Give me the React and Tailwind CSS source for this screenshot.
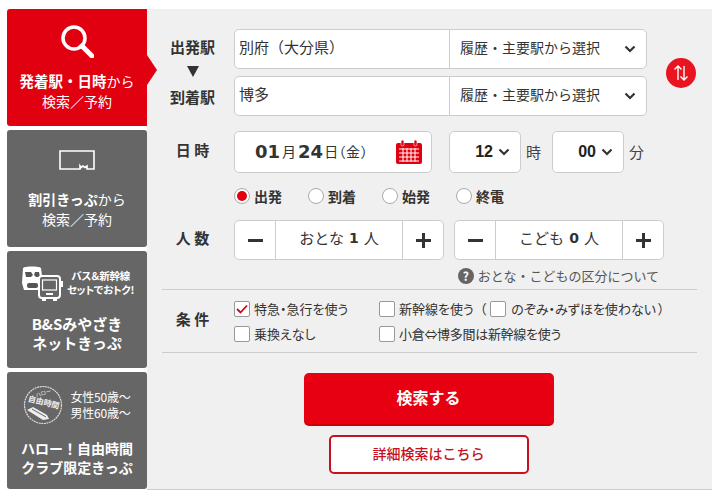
import React from "react";

const FONT = { fontFamily: '"Noto Sans CJK JP", "Liberation Sans", sans-serif' };

const Chevron = ({ className }) => (
  <svg viewBox="0 0 12 8" className={className} fill="none" stroke="#333" strokeWidth="2.2">
    <path d="M1.5 1.5 6 6l4.5-4.5" />
  </svg>
);

const SideTab = ({ active, children }) => (
  <div
    className={`relative h-[117px] rounded-l-[3px] flex flex-col items-center text-white ${
      active ? "bg-[#e1000f]" : "bg-[#666666] rounded-r-[3px]"
    }`}
  >
    {children}
    {active && (
      <div className="absolute left-full top-[46px] w-0 h-0 border-y-[15px] border-y-transparent border-l-[10px] border-l-[#e1000f]" />
    )}
  </div>
);

const Label = ({ children }) => (
  <div className="w-[72px] shrink-0 pr-[11px] pb-[5px] text-center text-[15px] font-bold text-[#333] leading-none">
    {children}
  </div>
);

const StationInput = ({ value }) => (
  <div className="h-10 w-[413px] flex bg-white border border-[#ccc] rounded-[5px] text-[#333]">
    <div className="w-[215px] border-r border-[#ccc] pl-[4px] pb-[3px] flex items-center text-[15px]">{value}</div>
    <div className="flex-1 pl-[10px] pr-[10px] flex items-center justify-between text-[14px]">
      <span className="pb-[3px]">履歴・主要駅から選択</span>
      <Chevron className="w-[12px] h-[8px]" />
    </div>
  </div>
);

const TimeSelect = ({ value }) => (
  <div className="h-[42px] w-[72px] bg-white border border-[#ccc] rounded-[5px] flex items-center justify-end pr-[10px] gap-[5px]">
    <span className="text-[16px] font-bold text-[#222]" style={{ fontFamily: '"Liberation Sans", sans-serif' }}>
      {value}
    </span>
    <Chevron className="w-[12px] h-[8px]" />
  </div>
);

const Radio = ({ checked, label, className = "" }) => (
  <div className={`flex items-center gap-[4px] ${className}`}>
    <span className="w-4 h-4 rounded-full bg-white border border-[#aaa] flex items-center justify-center">
      {checked && <span className="w-[10px] h-[10px] rounded-full bg-[#e1000f]" />}
    </span>
    <span className="text-[14px] font-bold text-[#333]">{label}</span>
  </div>
);

const Stepper = ({ label, count }) => (
  <div className="h-10 w-[210px] flex bg-white border border-[#ccc] rounded-[5px] text-[#333]">
    <div className="w-[41px] border-r border-[#ccc] flex items-center justify-center">
      <span className="w-[15px] h-[3px] bg-[#333]" />
    </div>
    <div className="flex-1 flex items-center justify-center text-[15px] gap-[5px] pb-[3px]">
      <span>{label}</span>
      <span className="font-bold text-[14px]" style={{ fontFamily: '"DejaVu Sans", sans-serif' }}>
        {count}
      </span>
      <span>人</span>
    </div>
    <div className="w-[41px] border-l border-[#ccc] flex items-center justify-center relative">
      <span className="w-[15px] h-[3px] bg-[#333]" />
      <span className="absolute w-[3px] h-[15px] bg-[#333]" />
    </div>
  </div>
);

const Check = ({ checked }) => (
  <span className="w-4 h-4 shrink-0 bg-white border border-[#999] rounded-[2px] flex items-center justify-center">
    {checked && (
      <svg viewBox="0 0 12 10" className="w-[12px] h-[10px]" fill="none" stroke="#d0021b" strokeWidth="1.8">
        <path d="M1 5l3.5 3.5L11 1.5" />
      </svg>
    )}
  </span>
);

const BusTrainIcon = () => (
  <svg viewBox="0 0 42 36" className="w-[42px] h-[36px] shrink-0">
    <path d="M2 3c2-2 16-2 18 0l1 8v14H3L1 18z" fill="#fff" />
    <path d="M4 7h6l2 3-2 2H5zM18 7h-4l-1 3 2 2h4z" fill="#555" />
    <rect x="6" y="18" width="11" height="5" rx="2" fill="#555" />
    <rect x="18" y="11" width="21" height="22" rx="3" fill="#666" stroke="#fff" strokeWidth="2" />
    <rect x="21.5" y="15" width="14" height="10" fill="none" stroke="#fff" strokeWidth="1.2" />
    <rect x="21" y="33" width="4" height="3" fill="#fff" />
    <rect x="32" y="33" width="4" height="3" fill="#fff" />
    <rect x="40" y="16" width="2" height="6" fill="#fff" />
    <rect x="25" y="28" width="7" height="2" fill="#fff" />
  </svg>
);

const StampIcon = () => (
  <svg viewBox="0 0 40 40" className="w-10 h-10 shrink-0">
    <circle cx="20" cy="20" r="18.5" fill="#666" stroke="#ddd" strokeWidth="1.2" strokeDasharray="2 0.6" />
    <text x="21" y="10" textAnchor="middle" fontSize="5.5" fill="#eee" transform="rotate(-18 21 10)">ハロー</text>
    <text x="20" y="20" textAnchor="middle" fontSize="8" fontWeight="700" fill="#eee" transform="rotate(14 20 20)">自由時間</text>
    <path d="M4 25l6-3 14 8 2 4-6 1z" fill="#eee" />
    <path d="M9 24l14 8" stroke="#666" strokeWidth="1" />
  </svg>
);

export default function App() {
  return (
    <div className="w-[720px] h-[500px] bg-white pt-[9px] pl-[7px] overflow-hidden" style={FONT}>
      <div className="flex w-[705px] h-[481px]">
        {/* Tabs */}
        <div className="w-[140px] shrink-0 flex flex-col gap-1">
          <SideTab active>
            <svg viewBox="0 0 34 34" className="w-[34px] h-[34px] mt-[15px]" fill="none" stroke="#fff">
              <circle cx="14" cy="14" r="11" strokeWidth="3.5" />
              <path d="M22 22l10 10" strokeWidth="5" strokeLinecap="round" />
            </svg>
            <div className="mt-[13px] text-[14.5px] leading-[20px] font-bold whitespace-nowrap">
              発着駅・日時<span className="font-normal text-[14px]">から</span>
            </div>
            <div className="text-[14px] leading-[20px]">検索／予約</div>
          </SideTab>

          <SideTab>
            <svg viewBox="0 0 36 20" className="w-[36px] h-[20px] mt-[20px]" fill="none" stroke="#fff" strokeWidth="1.6">
              <path d="M1 1h34v18h-7v-3l-2 1.5-2-1.5-2 1.5-1-1.5v3H1z" />
            </svg>
            <div className="mt-[19px] text-[14px] leading-[20px] font-bold whitespace-nowrap">
              割引きっぷ<span className="font-normal">から</span>
            </div>
            <div className="text-[14px] leading-[20px]">検索／予約</div>
          </SideTab>

          <SideTab>
            <div className="flex items-center gap-[4px] mt-[14px] pl-[14px] w-full">
              <BusTrainIcon />
              <div className="text-[10.5px] leading-[14px] font-bold text-center whitespace-nowrap tracking-[-0.3px] [font-feature-settings:'palt']">
                バス＆新幹線
                <br />
                セットでおトク!
              </div>
            </div>
            <div className="mt-[13px] text-[15px] leading-[19px] font-bold text-center whitespace-nowrap">
              B&amp;Sみやざき
              <br />
              ネットきっぷ
            </div>
          </SideTab>

          <SideTab>
            <div className="flex items-center gap-[7px] mt-[13px]">
              <StampIcon />
              <div className="text-[12px] leading-[16px] whitespace-nowrap tracking-[-0.2px]">
                女性50歳～
                <br />
                男性60歳～
              </div>
            </div>
            <div className="mt-[14px] text-[14px] leading-[19px] font-bold text-center whitespace-nowrap">
              ハロー！自由時間
              <br />
              クラブ限定きっぷ
            </div>
          </SideTab>
        </div>

        {/* Form */}
        <div className="flex-1 bg-[#f0f0f0] border-b border-[#ccc] pl-[15px] pt-[20px]">
          <div className="flex">
            <div className="w-[72px] shrink-0 pr-[11px] flex flex-col items-center text-[15px] font-bold text-[#333] leading-none pt-[10px]">
              <span>出発駅</span>
              <span className="mt-[12px] mb-[12px] w-0 h-0 border-x-[6px] border-x-transparent border-t-[11px] border-t-[#333]" />
              <span>到着駅</span>
            </div>
            <div className="flex flex-col gap-[7px]">
              <StationInput value="別府（大分県）" />
              <StationInput value="博多" />
            </div>
            <div className="ml-[19px] self-center w-[30px] h-[30px] rounded-full bg-[#e8141f] flex items-center justify-center">
              <svg viewBox="0 0 16 18" className="w-4 h-[18px]" fill="none" stroke="#fff" strokeWidth="1.4">
                <path d="M5 16V2M1.5 5.5 5 2l3.5 3.5M11 2v14M7.5 12.5 11 16l3.5-3.5" />
              </svg>
            </div>
          </div>

          <div className="flex items-center mt-[15px]">
            <Label>日 時</Label>
            <div className="h-[42px] w-[198px] bg-white border border-[#ccc] rounded-[5px] flex items-center pl-[20px] pr-[10px] pb-[1px] text-[#333]">
              <span className="text-[18px] font-bold" style={{ fontFamily: '"DejaVu Sans", sans-serif' }}>
                01
              </span>
              <span className="text-[14px] ml-[2px]">月</span>
              <span className="text-[18px] font-bold ml-[2px]" style={{ fontFamily: '"DejaVu Sans", sans-serif' }}>
                24
              </span>
              <span className="text-[14px] ml-[1px]">日</span>
              <span className="text-[14px] tracking-[1px] [font-feature-settings:'palt']">（金）</span>
              <svg viewBox="0 0 26 24" className="w-[26px] h-[24px] ml-auto -mr-[1px]">
                <rect x="0" y="3" width="26" height="21" rx="2" fill="#e1000f" />
                <rect x="5" y="0" width="3" height="6" rx="1.5" fill="#e1000f" stroke="#fff" strokeWidth="0.6" />
                <rect x="18" y="0" width="3" height="6" rx="1.5" fill="#e1000f" stroke="#fff" strokeWidth="0.6" />
                <path d="M3 9h20M3 13h20M3 17h20M3 21h20M7 8v14M11 8v14M15 8v14M19 8v14" stroke="#fff" strokeWidth="1" />
              </svg>
            </div>
            <div className="ml-[17px]">
              <TimeSelect value="12" />
            </div>
            <span className="text-[15px] text-[#444] w-[31px] pl-[5px]">時</span>
            <TimeSelect value="00" />
            <span className="text-[15px] text-[#444] pl-[5px]">分</span>
          </div>

          <div className="flex mt-[13px] ml-[72px] h-[20px]">
            <Radio checked label="出発" className="w-[74px]" />
            <Radio label="到着" className="w-[74px]" />
            <Radio label="始発" className="w-[74px]" />
            <Radio label="終電" />
          </div>

          <div className="flex items-center mt-[14px]">
            <Label>人 数</Label>
            <div className="flex gap-[10px]">
              <Stepper label="おとな" count="1" />
              <Stepper label="こども" count="0" />
            </div>
          </div>

          <div className="flex items-center justify-end w-[497px] mt-[6px] h-[20px] text-[13px] text-[#555] gap-[4px]">
            <span className="w-4 h-4 rounded-full bg-[#666] text-white text-[12px] font-bold flex items-center justify-center">
              ?
            </span>
            <span>おとな・こどもの区分について</span>
          </div>

          <div className="w-[535px] mt-[3px] h-[64px] border-y border-[#ccc] flex items-center">
            <Label>条 件</Label>
            <div className="flex flex-col gap-[9px] pt-[1px] text-[13px] leading-4 text-[#333] [font-feature-settings:'palt']">
              <div className="flex items-center">
                <div className="w-[145px] flex items-center gap-[4px]">
                  <Check checked />
                  <span>特急・急行を使う</span>
                </div>
                <Check />
                <span className="ml-[4px]">新幹線を使う</span>
                <span className="ml-[6px] mr-[4px]">（</span>
                <Check />
                <span className="ml-[5px]">のぞみ・みずほを使わない</span>
                <span className="ml-[2px]">）</span>
              </div>
              <div className="flex items-center">
                <div className="w-[145px] flex items-center gap-[4px]">
                  <Check />
                  <span>乗換えなし</span>
                </div>
                <Check />
                <span className="ml-[4px] tracking-[-0.3px]">小倉⇔博多間は新幹線を使う</span>
              </div>
            </div>
          </div>

          <div className="w-[533px] flex flex-col items-center mt-[20px]">
            <div className="w-[250px] h-[53px] bg-[#e60012] border-b-2 border-[#c00] rounded-[5px] pb-[3px] flex items-center justify-center text-white text-[16px] font-bold">
              検索する
            </div>
            <div className="w-[200px] h-[39px] mt-[9px] bg-white border-2 border-[#c8101e] rounded-[5px] pb-[2px] flex items-center justify-center text-[#c8101e] text-[14px] font-medium">
              詳細検索はこちら
            </div>
          </div>
        </div>
      </div>
    </div>
  );
}
